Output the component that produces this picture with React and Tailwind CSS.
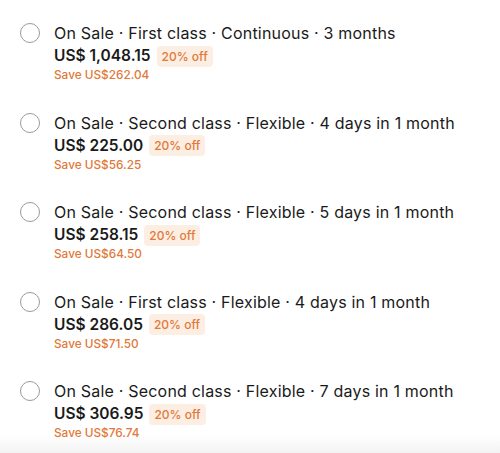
import React from "react";

const rows = [
  { t: "On Sale · First class · Continuous · 3 months", p: "US$ 1,048.15", s: "Save US$262.04" },
  { t: "On Sale · Second class · Flexible · 4 days in 1 month", p: "US$ 225.00", s: "Save US$56.25" },
  { t: "On Sale · Second class · Flexible · 5 days in 1 month", p: "US$ 258.15", s: "Save US$64.50" },
  { t: "On Sale · First class · Flexible · 4 days in 1 month", p: "US$ 286.05", s: "Save US$71.50" },
  { t: "On Sale · Second class · Flexible · 7 days in 1 month", p: "US$ 306.95", s: "Save US$76.74" },
];

export default function App() {
  return (
    <div
      className="w-[500px] h-[453px] overflow-hidden bg-gradient-to-b from-white from-[96%] to-[#f3f3f3] pt-[21px] pl-5"
      style={{ fontFamily: "Inter, 'Open Sans', sans-serif" }}
    >
      <div className="flex flex-col gap-[28.5px]">
        {rows.map((r, i) => (
          <div key={i} className="flex gap-[14px]">
            <div className="mt-[2px] w-5 h-5 rounded-full border border-[#9a9a9a] shrink-0" />
            <div className="flex flex-col">
              <div className="text-[16px] leading-6 text-[#1a1a1a] tracking-[0.2px]">{r.t}</div>
              <div className="flex items-center gap-[6px] h-[22px]">
                <span className="text-[15.5px] font-semibold text-[#1a1a1a]">{r.p}</span>
                <span className="bg-[#fdeee3] text-[#e0793a] text-[12px] leading-[21px] px-[5px] rounded-[4px] font-medium">20% off</span>
              </div>
              <div className="text-[11.8px] leading-[14px] mt-[1px] text-[#e0793a] font-medium">{r.s}</div>
            </div>
          </div>
        ))}
      </div>
    </div>
  );
}
